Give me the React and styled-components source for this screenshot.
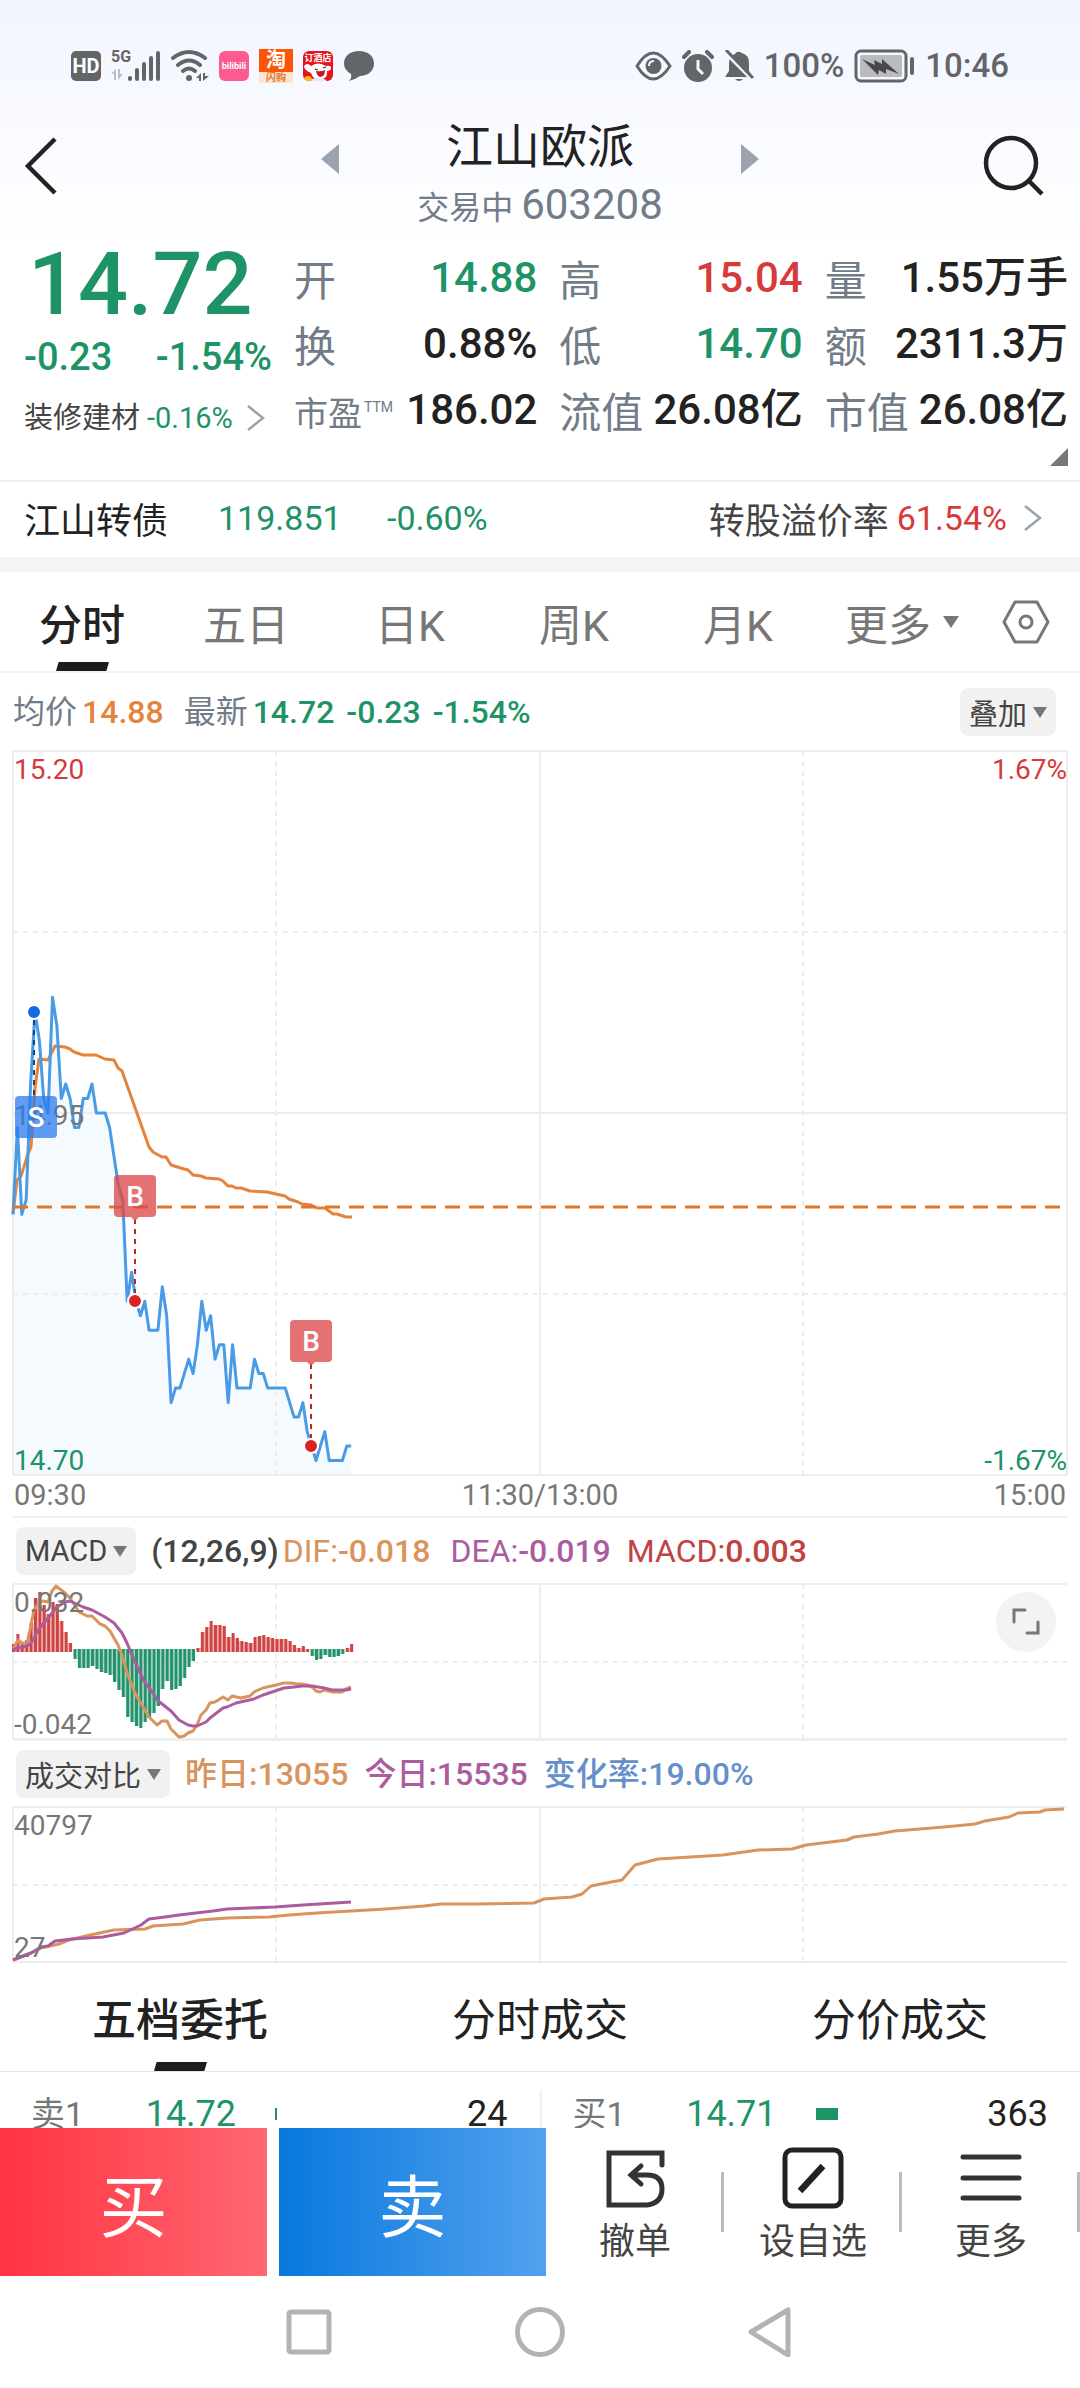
import React from 'react';
import styled, { createGlobalStyle } from 'styled-components';

const GREEN = '#1d9366';
const RED = '#d63b3b';
const INK = '#222';
const SLATE = '#717c88';
const GREY = '#777';
const ORANGE = '#e5833a';
const TAN = '#d9935c';
const PURPLE = '#ab5c9e';

const METRICS = [
  { label: '开', value: '14.88', color: GREEN },
  { label: '高', value: '15.04', color: RED },
  { label: '量', value: '1.55万手' },
  { label: '换', value: '0.88%' },
  { label: '低', value: '14.70', color: GREEN },
  { label: '额', value: '2311.3万' },
  { label: '市盈', sup: 'TTM', value: '186.02' },
  { label: '流值', value: '26.08亿' },
  { label: '市值', value: '26.08亿' },
];

const PERIODS = ['分时', '五日', '日K', '周K', '月K', '更多'];
const DETAIL_TABS = ['五档委托', '分时成交', '分价成交'];

const ORDERS = [
  { side: '卖1', price: '14.72', depth: 2, volume: '24' },
  { side: '买1', price: '14.71', depth: 22, volume: '363' },
];

const MINUTES = 240;
const CHART_W = 1054;
const PRICE_H = 724;
const SUB_H = 155;
const STEP = CHART_W / MINUTES;

// minute prices, in cents above 14.70
const PRICES = [
  18, 24, 18, 19, 27, 32, 30, 26, 25, 33, 31, 26, 27, 26, 24, 24, 26, 26, 27, 25,
  25, 25, 24, 22, 20, 19, 12, 14, 12, 11, 12, 10, 10, 10, 13, 11, 5, 6, 6, 7,
  8, 7, 9, 12, 10, 11, 8, 9, 9, 5, 9, 6, 6, 6, 6, 8, 7, 7, 6, 6,
  6, 6, 6, 5, 4, 4, 5, 3, 2, 1, 2, 3, 1, 1, 1, 1, 2, 2,
];

const AVERAGE = '0,463 4,429 8,425 15,403 18,396 22,337 26,308 35,309 42,295 52,296 57,298 61,301 70,304 83,304 92,308 101,309 105,317 109,320 136,396 140,401 149,406 153,406 158,414 171,418 175,419 180,424 188,425 193,427 206,428 210,430 215,435 219,435 223,437 228,437 237,440 254,441 263,443 272,445 276,448 285,451 289,453 298,454 304,457 312,457 320,463 324,463 333,466 339,466';

const MACD_ZERO = 66;
const MACD_BARS = [
  60, 50, 58, 56, 39, 14, 8, 21, 30, 18, 20, 37, 48, 59,
  75, 84, 84, 84, 82, 85, 88, 89, 91, 98, 106, 113, 133, 138, 142, 144, 138, 134, 129, 122, 105, 97, 106, 105, 102, 94, 83, 77,
  64, 48, 43, 37, 41, 41, 42, 53, 49, 54, 57, 58, 59, 53, 52, 51, 53, 54, 55, 55, 55, 57, 61, 64, 62, 65,
  72, 76, 75, 71, 73, 73, 72, 70, 64, 60,
];
const DIF = '0,65 5,56 9,59 14,59 17,46 21,26 26,18 30,17 35,18 39,7 43,2 52,9 57,14 66,28 74,32 79,32 87,40 92,42 97,47 105,61 109,71 114,89 122,109 127,118 136,133 144,141 149,137 154,137 158,145 166,153 171,152 175,149 180,147 184,141 188,131 193,126 197,119 202,118 210,113 215,116 219,112 228,114 237,112 241,108 250,104 263,101 271,99 277,99 285,100 289,100 294,101 299,103 303,107 307,108 311,106 320,108 329,108 333,105 338,103';
const DEA = '0,66 5,64 14,62 18,59 26,45 35,34 44,23 52,18 57,17 70,23 79,26 92,33 101,39 109,49 114,59 122,78 131,97 140,109 144,116 158,127 166,136 175,141 180,142 184,142 193,138 197,134 210,124 214,123 223,119 241,115 250,111 259,108 271,104 281,103 289,102 299,102 311,104 319,106 325,106 333,106 338,105';

const YESTERDAY = '0,153 18,146 28,141 46,137 56,133 77,128 101,123 132,122 140,119 170,117 187,113 214,111 256,110 276,108 304,106 338,104 373,102 411,99 428,97 462,97 521,96 531,92 559,90 569,87 578,79 593,76 609,73 622,58 645,52 710,48 745,43 779,42 793,38 834,33 841,30 865,27 882,24 931,20 962,17 972,14 996,10 1005,6 1027,5 1032,3 1051,2';
const TODAY = '0,153 18,146 28,140 35,139 42,134 59,132 90,130 111,126 128,118 136,112 152,110 166,108 200,104 214,102 262,100 290,98 338,95';

const TRADES = [
  { type: 'S', x: 21, dot: 261, box: 345, left: 2 },
  { type: 'B', x: 122, dot: 550, box: 424, left: 101 },
  { type: 'B', x: 298, dot: 695, box: 569, left: 277 },
];

const Chevron = () => (
  <svg width="20" height="28" viewBox="0 0 20 28" fill="none" stroke="#9aa2ad" strokeWidth="2.5" aria-hidden="true">
    <path d="M2 2l15 12L2 26" />
  </svg>
);

const SystemBar = () => (
  <StatusBar>
    <StatusIcons>
      <HdBadge>HD</HdBadge>
      <Signal>
        <span>5G</span>
        <svg width="50" height="34" viewBox="0 0 50 34" aria-hidden="true">
          <path d="M0 25l5-5v11H3v-6zM7 20v11l5-6h-3v-5z" fill="#bcbec2" />
          <g stroke="#646569" strokeWidth="4" strokeLinecap="round">
            <path d="M19 30v-1M26 30V21M33 30V15M40 30V9M47 30V4" />
          </g>
        </svg>
      </Signal>
      <svg width="38" height="34" viewBox="0 0 38 34" fill="none" stroke="#646569" strokeWidth="4" strokeLinecap="round" aria-hidden="true">
        <path d="M2 9q16-12 32 0M7 16q11-9 22 0M12 22q6-5 12 0" />
        <circle cx="18" cy="29" r="3" fill="#646569" stroke="none" />
        <path d="M25 29l5-5v8h-2v-3zM32 24v8l6-5h-4v-3z" fill="#646569" stroke="none" />
      </svg>
      <PinkApp>bilibili</PinkApp>
      <OrangeApp><b>淘</b><small>闪购</small></OrangeApp>
      <RedApp>
        <small>订酒店</small>
        <svg width="30" height="20" viewBox="0 0 30 20" aria-hidden="true">
          <path d="M1 4q3-4 7 0 7-5 15 0 5-1 5 2 0 3-4 3 1 8-7 8-7 1-9-6-7-3-7-7z" fill="#fff" />
          <path d="M12 7l3 1M20 6l3-1" stroke="#333" strokeWidth="1.3" />
          <path d="M13 9q5 1 9-1 0 7-5 7-3-1-4-6z" fill="#c51723" />
          <path d="M7 20q0-4 8-4t9 4z" fill="#e3e9fa" />
          <circle cx="5" cy="18" r="4" fill="#ffb72d" />
        </svg>
      </RedApp>
      <svg width="32" height="32" viewBox="0 0 32 32" fill="#646569" aria-hidden="true">
        <path d="M16 1c9 0 15 5 15 12.500S25 26 17 26q-4 3-11 5 3-3 2-7-7-4-7-10.500C1 6 7 1 16 1z" />
      </svg>
    </StatusIcons>
    <StatusIcons>
      <svg width="37" height="30" viewBox="0 0 37 30" fill="none" stroke="#646569" strokeWidth="3" aria-hidden="true">
        <path d="M2 15q16-26 33 0-17 26-33 0z" />
        <circle cx="18.500" cy="15" r="8" fill="#646569" stroke="none" />
        <path d="M14 15q0-5 5-5" stroke="#f4f8ff" strokeWidth="2" />
      </svg>
      <svg width="32" height="32" viewBox="0 0 32 32" aria-hidden="true">
        <circle cx="16" cy="18" r="14" fill="#646569" />
        <path d="M2 7l5-5M30 7l-5-5" stroke="#646569" strokeWidth="4" strokeLinecap="round" />
        <path d="M16 10v9l5 5" fill="none" stroke="#f4f8ff" strokeWidth="3" />
      </svg>
      <svg width="30" height="32" viewBox="0 0 30 32" aria-hidden="true">
        <path d="M1 27l4-6v-8q0-7 6-9 2-4 7-1 7 2 7 10v8l4 6zM11 29h8q-4 4-8 0z" fill="#646569" />
        <path d="M0 1l28 28" stroke="#f4f8ff" strokeWidth="4" />
        <path d="M2 0l27 28" stroke="#646569" strokeWidth="3" />
      </svg>
      <span>100%</span>
      <svg width="61" height="34" viewBox="0 0 61 34" aria-hidden="true">
        <rect x="2" y="2" width="50" height="30" rx="5" fill="none" stroke="#646569" strokeWidth="3" />
        <rect x="6" y="6" width="42" height="22" rx="2" fill="#b9bbbf" />
        <path d="M8 10l13 6-1-5 8 4 0-5 17 15-13-5v5l-7-4-1 5z" fill="#47484b" />
        <path d="M58 10v14" stroke="#646569" strokeWidth="4" strokeLinecap="round" />
      </svg>
      <span>10:46</span>
    </StatusIcons>
  </StatusBar>
);

const Grid = ({ height, rows }) => (
  <g fill="none" stroke="#eceeee" strokeWidth="2">
    <path d={`M0 0H${CHART_W}M0 ${height}H${CHART_W}M0 0V${height}M527 0V${height}`} />
    <path d={`M263 0V${height}M790 0V${height}`} strokeDasharray="5 5" />
    {rows.map((y) => <path key={y} d={`M0 ${y}H${CHART_W}`} strokeDasharray="5 5" />)}
  </g>
);

const PriceChart = () => {
  const line = PRICES.map((p, i) => `${(i * STEP).toFixed(1)},${(PRICE_H - p * 14.48).toFixed(1)}`).join(' ');
  const endX = (PRICES.length - 1) * STEP;
  return (
    <ChartBox>
      <Plot viewBox={`0 0 ${CHART_W} ${PRICE_H}`} role="img" aria-label="分时">
        <polygon points={`0,${PRICE_H} ${line} ${endX},${PRICE_H}`} fill="#f5faff" />
        <Grid height={PRICE_H} rows={[181, 543]} />
        <path d={`M0 362H${CHART_W}M${CHART_W} 0V${PRICE_H}`} stroke="#eceeee" strokeWidth="2" />
        <polyline points={AVERAGE} fill="none" stroke={ORANGE} strokeWidth="3" strokeLinejoin="round" />
        <polyline points={line} fill="none" stroke="#4a9be5" strokeWidth="3" strokeLinejoin="round" />
        <path d={`M0 456H${CHART_W}`} stroke="#e2762b" strokeWidth="3" strokeDasharray="15 9" />
      </Plot>
      <AxisLabel $top={0} $color={RED}>15.20</AxisLabel>
      <AxisLabel $top={0} $color={RED} $right>1.67%</AxisLabel>
      <AxisLabel $top={346}>14.95</AxisLabel>
      <AxisLabel $bottom={-5} $color={GREEN}>14.70</AxisLabel>
      <AxisLabel $bottom={-5} $color={GREEN} $right>-1.67%</AxisLabel>
      <Overlay viewBox={`0 0 ${CHART_W} ${PRICE_H}`} aria-hidden="true">
        {TRADES.map(({ type, x, dot, box, left }) => {
          const sell = type === 'S';
          return (
            <g key={x}>
              <path
                d={sell ? `M${x} ${dot + 8}V${box}` : `M${x} ${box + 44}V${dot - 8}`}
                stroke={sell ? '#1c3f80' : '#b02a2a'}
                strokeWidth="2"
                strokeDasharray="5 5"
              />
              <circle cx={x} cy={dot} r="7" fill={sell ? '#1269e6' : '#d92222'} stroke="#fff" strokeWidth="2" />
              <rect x={left} y={box} width="42" height="42" rx="4" fill={sell ? '#2b7bee' : '#dc4a4a'} fillOpacity={sell ? 0.75 : 0.78} />
              {!sell && <path d={`M${x - 4} ${box + 42}h8l-4 4z`} fill="#dc4a4a" fillOpacity="0.78" />}
              <text x={left + 21} y={box + 31} textAnchor="middle" fontSize="28" fontWeight="500" fill="#fff">{type}</text>
            </g>
          );
        })}
      </Overlay>
    </ChartBox>
  );
};

const MacdChart = () => (
  <ChartBox>
    <Plot viewBox={`0 0 ${CHART_W} ${SUB_H}`} role="img" aria-label="MACD">
      <Grid height={SUB_H} rows={[78]} />
      {MACD_BARS.map((y, i) => {
        const up = y < MACD_ZERO;
        const next = MACD_BARS[i + 1];
        const joined = next !== undefined && next < MACD_ZERO === up;
        const edge = up ? Math.max(y, next) : Math.min(y, next);
        return (
          <g key={i} fill={up ? '#d04343' : '#22936a'}>
            <rect x={i * STEP - 1} y={up ? y : 65} width="3" height={up ? 68 - y : y - 65} />
            {joined && <rect x={i * STEP + 2} y={up ? edge : 65} width="1.4" height={up ? 68 - edge : edge - 65} opacity="0.4" />}
          </g>
        );
      })}
      <polyline points={DIF} fill="none" stroke={TAN} strokeWidth="3" strokeLinejoin="round" />
      <polyline points={DEA} fill="none" stroke={PURPLE} strokeWidth="3" strokeLinejoin="round" />
    </Plot>
    <AxisLabel $top={0}>0.032</AxisLabel>
    <AxisLabel $bottom={-5}>-0.042</AxisLabel>
    <ExpandButton type="button" aria-label="MACD">
      <svg width="28" height="28" viewBox="0 0 28 28" fill="none" stroke={GREY} strokeWidth="3" strokeLinecap="round" aria-hidden="true">
        <path d="M2 14V2h11M26 14v11H15" />
      </svg>
    </ExpandButton>
  </ChartBox>
);

const VolumeChart = () => (
  <ChartBox>
    <Plot viewBox={`0 0 ${CHART_W} ${SUB_H}`} role="img" aria-label="成交对比">
      <Grid height={SUB_H} rows={[78]} />
      <polyline points={YESTERDAY} fill="none" stroke={TAN} strokeWidth="3" strokeLinejoin="round" />
      <polyline points={TODAY} fill="none" stroke={PURPLE} strokeWidth="3" strokeLinejoin="round" />
    </Plot>
    <AxisLabel $top={0}>40797</AxisLabel>
    <AxisLabel $bottom={-5}>27</AxisLabel>
  </ChartBox>
);

const App = () => (
  <>
    <GlobalStyle />
    <Screen>
      <Content>
        <SystemBar />
        <Header>
          <IconButton type="button" aria-label="返回">
            <svg width="34" height="60" viewBox="0 0 34 60" fill="none" stroke={INK} strokeWidth="4.500" aria-hidden="true">
              <path d="M31 3L4 30l27 27" />
            </svg>
          </IconButton>
          <StockNav>
            <StepButton type="button" aria-label="上一只">
              <svg width="18" height="30" viewBox="0 0 18 30" fill="#9aa3ae"><path d="M18 0v30L0 15z" /></svg>
            </StepButton>
            <StockTitle>
              <h1>江山欧派</h1>
              <p>交易中 <b>603208</b></p>
            </StockTitle>
            <StepButton type="button" aria-label="下一只">
              <svg width="18" height="30" viewBox="0 0 18 30" fill="#9aa3ae"><path d="M0 0v30l18-15z" /></svg>
            </StepButton>
          </StockNav>
          <IconButton type="button" aria-label="搜索" $end>
            <svg width="62" height="62" viewBox="0 0 62 62" fill="none" stroke={INK} strokeWidth="4.500" aria-hidden="true">
              <circle cx="29" cy="28" r="25" />
              <path d="M47 46l13 13" />
            </svg>
          </IconButton>
        </Header>

        <Quote>
          <QuoteMain>
            <Price>14.72</Price>
            <Change><span>-0.23</span><span>-1.54%</span></Change>
            <Sector href="#sector">装修建材 <b>-0.16%</b><Chevron /></Sector>
          </QuoteMain>
          <Metrics>
            {METRICS.map(({ label, sup, value, color }) => (
              <Metric key={label}>
                <MetricLabel $small={!!sup}>{label}{sup && <sup>{sup}</sup>}</MetricLabel>
                <MetricValue $color={color}>{value}</MetricValue>
              </Metric>
            ))}
          </Metrics>
          <Corner viewBox="0 0 18 18" aria-hidden="true"><path d="M18 0v18H0z" fill={GREY} /></Corner>
        </Quote>

        <Bond href="#bond">
          <BondName>江山转债</BondName>
          <BondFigure $width={169}>119.851</BondFigure>
          <BondFigure>-0.60%</BondFigure>
          <Premium>转股溢价率<b>61.54%</b></Premium>
          <Chevron />
        </Bond>

        <PeriodTabs>
          {PERIODS.map((name, i) => (
            <PeriodTab key={name} type="button" $active={i === 0}>
              {name}{name === '更多' && <Caret $size={8} />}
            </PeriodTab>
          ))}
          <Settings type="button" aria-label="设置">
            <svg width="48" height="44" viewBox="0 0 48 44" fill="none" stroke={GREY} strokeWidth="3" strokeLinejoin="round" aria-hidden="true">
              <path d="M13 2h22l11 20-11 20H13L2 22z" />
              <circle cx="24" cy="22" r="6" />
            </svg>
          </Settings>
        </PeriodTabs>

        <Legend>
          <Item $color={ORANGE} $gap={20}><i>均价</i>14.88</Item>
          <Item $color={GREEN} $gap={12}><i>最新</i>14.72</Item>
          <Item $color={GREEN} $gap={12}>-0.23</Item>
          <Item $color={GREEN}>-1.54%</Item>
          <Picker type="button" $end>叠加<Caret $size={7} /></Picker>
        </Legend>
        <PriceChart />
        <TimeAxis><span>09:30</span><span>11:30/13:00</span><span>15:00</span></TimeAxis>

        <Legend $compact>
          <Picker type="button">MACD<Caret $size={7} /></Picker>
          <Item $color="#444" $gap={4}>(12,26,9)</Item>
          <Item $color={TAN} $gap={20}><u>DIF:</u>-0.018</Item>
          <Item $color={PURPLE} $gap={16}><u>DEA:</u>-0.019</Item>
          <Item $color="#c24141"><u>MACD:</u>0.003</Item>
        </Legend>
        <MacdChart />

        <Legend $compact>
          <Picker type="button">成交对比<Caret $size={7} /></Picker>
          <Item $color={TAN} $gap={16}>昨日:13055</Item>
          <Item $color={PURPLE} $gap={16}>今日:15535</Item>
          <Item $color="#648fca">变化率:19.00%</Item>
        </Legend>
        <VolumeChart />

        <DetailTabs>
          {DETAIL_TABS.map((name, i) => (
            <DetailTab key={name} type="button" $active={i === 0}>{name}</DetailTab>
          ))}
        </DetailTabs>
        <OrderBook>
          {ORDERS.map(({ side, price, depth, volume }) => (
            <OrderTable key={side}>
              <tbody>
                <tr>
                  <th scope="row">{side}</th>
                  <td>{price}</td>
                  <td><DepthBar style={{ width: depth }} /></td>
                  <td>{volume}</td>
                </tr>
              </tbody>
            </OrderTable>
          ))}
        </OrderBook>
      </Content>

      <Dock>
        <TradeButton type="button" $from="#ff3341" $to="#ff6771">买</TradeButton>
        <TradeButton type="button" $from="#0878dd" $to="#52a1ef">卖</TradeButton>
        <DockItem type="button">
          <svg width="62" height="62" viewBox="0 0 62 62" fill="none" stroke="#333" strokeWidth="5" strokeLinecap="round" aria-hidden="true">
            <path d="M58 18V6H5v52h38q15-2 15-16 0-14-15-14H28M37 19l-10 9 10 9" />
          </svg>
          撤单
        </DockItem>
        <DockItem type="button">
          <svg width="62" height="62" viewBox="0 0 62 62" fill="none" stroke={INK} strokeWidth="5" aria-hidden="true">
            <rect x="3" y="3" width="56" height="56" rx="7" />
            <path d="M18 44l23-25" strokeWidth="6.500" />
          </svg>
          设自选
        </DockItem>
        <DockItem type="button">
          <svg width="62" height="62" viewBox="0 0 62 62" fill="none" stroke="#333" strokeWidth="5" strokeLinecap="round" aria-hidden="true">
            <path d="M3 10h56M3 31h56M3 51h56" />
          </svg>
          更多
        </DockItem>
      </Dock>
      <SystemNav>
        <button type="button" aria-label="最近">
          <svg width="50" height="50" viewBox="0 0 50 50"><rect x="5" y="5" width="40" height="40" rx="2" /></svg>
        </button>
        <button type="button" aria-label="主页">
          <svg width="50" height="50" viewBox="0 0 50 50"><circle cx="25" cy="25" r="22.500" /></svg>
        </button>
        <button type="button" aria-label="后退">
          <svg width="50" height="50" viewBox="0 0 50 50"><path d="M42 3v45L5 25z" /></svg>
        </button>
      </SystemNav>
    </Screen>
  </>
);

const GlobalStyle = createGlobalStyle`
  * {
    box-sizing: border-box;
  }

  body {
    margin: 0;
    background: #fff;
    color: ${INK};
    font-family: Roboto, "Noto Sans CJK SC", sans-serif;
  }

  h1, p, dl, dd {
    margin: 0;
  }

  button {
    margin: 0;
    padding: 0;
    border: 0;
    background: none;
    color: inherit;
    font: inherit;
    cursor: pointer;
  }

  a {
    color: inherit;
    text-decoration: none;
  }

  svg {
    display: block;
    flex: none;
  }
`;

const Screen = styled.div`
  display: flex;
  flex-direction: column;
  height: 100vh;
`;

const Content = styled.main`
  flex: 1;
  min-height: 0;
  overflow-y: auto;
  scrollbar-width: none;
  background: linear-gradient(#f1f5ff, #fff 240px);
`;

const StatusBar = styled.div`
  display: flex;
  align-items: center;
  justify-content: space-between;
  height: 110px;
  padding: 22px 71px 0;
`;

const StatusIcons = styled.div`
  display: flex;
  align-items: center;
  gap: 10px;
  color: #646569;
  font-size: 33px;
  font-weight: 500;
  line-height: 40px;
`;

const HdBadge = styled.span`
  width: 30px;
  height: 30px;
  border-radius: 5px;
  background: #646569;
  color: #fff;
  font-size: 20px;
  font-weight: 700;
  line-height: 30px;
  text-align: center;
`;

const Signal = styled.span`
  position: relative;

  span {
    position: absolute;
    top: 0;
    left: 0;
    font-size: 16px;
    font-weight: 700;
    line-height: 16px;
  }
`;

const PinkApp = styled.span`
  width: 30px;
  height: 30px;
  border-radius: 6px;
  background: #fd5a92;
  color: #fff;
  font-size: 9px;
  font-weight: 700;
  line-height: 30px;
  text-align: center;
`;

const OrangeApp = styled.span`
  display: flex;
  flex-direction: column;
  width: 34px;
  height: 34px;
  background: #fff;
  text-align: center;

  b {
    height: 23px;
    background: #fb5607;
    color: #fff;
    font-size: 20px;
    line-height: 22px;
  }

  small {
    background: #ffe5d0;
    color: #dd7a2c;
    font-size: 10px;
    font-weight: 700;
    line-height: 11px;
  }
`;

const RedApp = styled.span`
  width: 30px;
  height: 30px;
  overflow: hidden;
  border-radius: 6px;
  background: #e8141c;

  small {
    display: block;
    height: 11px;
    color: #fff;
    font-size: 9px;
    font-weight: 700;
    line-height: 14px;
    text-align: center;
  }
`;

const Header = styled.header`
  display: grid;
  grid-template-columns: 1fr 438px 1fr;
  height: 137px;
  padding: 0 24px;
`;

const IconButton = styled.button`
  justify-self: ${({ $end }) => ($end ? 'end' : 'start')};
  display: flex;
  align-items: center;
  height: 112px;
  padding-right: ${({ $end }) => ($end ? 12 : 0)}px;
`;

const StockNav = styled.div`
  display: flex;
  justify-content: space-between;
`;

const StepButton = styled.button`
  display: flex;
  align-items: center;
  height: 98px;
`;

const StockTitle = styled.div`
  padding-top: 7px;
  text-align: center;

  h1 {
    font-size: 47px;
    font-weight: 400;
    line-height: 60px;
  }

  p {
    color: ${SLATE};
    font-size: 32px;
    line-height: 56px;
  }

  b {
    font-size: 42px;
    font-weight: 400;
  }
`;

const Quote = styled.section`
  position: relative;
  display: flex;
  padding: 0 12px 35px 24px;
  border-bottom: 2px solid #f2f2f2;
`;

const QuoteMain = styled.div`
  width: 270px;
`;

const Price = styled.div`
  padding-left: 4px;
  color: ${GREEN};
  font-size: 88px;
  font-weight: 500;
  line-height: 74px;
`;

const Change = styled.div`
  display: flex;
  justify-content: space-between;
  padding-right: 22px;
  color: ${GREEN};
  font-size: 38px;
  font-weight: 500;
  line-height: 72px;
`;

const Sector = styled.a`
  display: flex;
  align-items: center;
  gap: 7px;
  color: #444;
  font-size: 29px;
  line-height: 50px;

  b {
    color: ${GREEN};
    font-weight: 400;
  }

  svg {
    margin-left: 6px;
  }
`;

const Metrics = styled.dl`
  flex: 1;
  display: grid;
  grid-template-columns: repeat(3, 1fr);
  column-gap: 22px;
`;

const Metric = styled.div`
  display: flex;
  justify-content: space-between;
  height: 66px;
  white-space: nowrap;
`;

const MetricLabel = styled.dt`
  padding-top: 4px;
  color: ${SLATE};
  font-size: ${({ $small }) => ($small ? 34 : 42)}px;
  line-height: 62px;

  sup {
    margin-left: 2px;
    font-size: 14px;
    line-height: 14px;
    vertical-align: 14px;
  }
`;

const MetricValue = styled.dd`
  color: ${({ $color }) => $color || INK};
  font-size: 42px;
  font-weight: 500;
  line-height: 62px;
`;

const Corner = styled.svg`
  position: absolute;
  right: 12px;
  bottom: 14px;
  width: 18px;
  height: 18px;
`;

const Bond = styled.a`
  display: flex;
  align-items: center;
  height: 90px;
  padding: 0 37px 4px 24px;
  border-bottom: 15px solid #f4f4f4;
  background: #fff;
`;

const BondName = styled.span`
  width: 194px;
  font-size: 36px;
`;

const BondFigure = styled.span`
  width: ${({ $width }) => ($width ? `${$width}px` : 'auto')};
  color: ${GREEN};
  font-size: 34px;
`;

const Premium = styled.span`
  display: flex;
  align-items: center;
  gap: 8px;
  margin: 0 16px 0 auto;
  color: #444;
  font-size: 36px;

  b {
    color: ${RED};
    font-size: 34px;
    font-weight: 400;
  }
`;

const PeriodTabs = styled.nav`
  display: flex;
  height: 101px;
  padding-right: 12px;
  border-bottom: 2px solid #f2f2f2;
`;

const tabMarker = `
  &::after {
    content: '';
    position: absolute;
    bottom: 0;
    left: calc(50% - 26px);
    width: 53px;
    height: 9px;
    background: #1c1c1c;
    clip-path: polygon(5% 0, 100% 0, 95% 100%, 0 100%);
  }
`;

const PeriodTab = styled.button`
  position: relative;
  flex: 164;
  display: flex;
  align-items: center;
  justify-content: center;
  gap: 12px;
  color: ${({ $active }) => ($active ? INK : GREY)};
  font-size: 43px;
  font-weight: ${({ $active }) => ($active ? 500 : 400)};
  ${({ $active }) => $active && tabMarker}
`;

const Settings = styled.button`
  flex: 84;
  display: flex;
  align-items: center;
  justify-content: center;
`;

const Caret = styled.span`
  width: 0;
  border: ${({ $size }) => $size}px solid transparent;
  border-top: ${({ $size }) => $size + 4}px solid ${GREY};
  border-bottom: 0;
`;

const Legend = styled.div`
  display: flex;
  align-items: center;
  height: ${({ $compact }) => ($compact ? 68 : 78)}px;
  margin: 0 13px;
  border-top: ${({ $compact }) => ($compact ? '2px solid #f0f0f0' : 0)};
  white-space: nowrap;
`;

const Item = styled.span`
  margin-right: ${({ $gap }) => $gap || 0}px;
  color: ${({ $color }) => $color};
  font-size: 32px;
  font-weight: 500;
  line-height: 48px;

  i {
    margin-right: 5px;
    color: ${SLATE};
    font-style: normal;
    font-weight: 400;
  }

  u {
    font-weight: 400;
    text-decoration: none;
  }
`;

const Picker = styled.button`
  display: flex;
  align-items: center;
  gap: 6px;
  height: 48px;
  margin: ${({ $end }) => ($end ? '0 11px 0 auto' : '0 15px 0 3px')};
  padding: 0 9px;
  border-radius: 8px;
  background: #f1f1f1;
  color: #444;
  font-size: 29px;
`;

const ChartBox = styled.div`
  position: relative;
  margin: 0 13px;
`;

const Plot = styled.svg`
  width: 100%;
  overflow: visible;
`;

const Overlay = styled(Plot)`
  position: absolute;
  inset: 0;
`;

const AxisLabel = styled.span`
  position: absolute;
  ${({ $bottom, $top }) => ($bottom === undefined ? `top: ${$top}px` : `bottom: ${$bottom}px`)};
  ${({ $right }) => ($right ? 'right: 0' : 'left: 1px')};
  color: ${({ $color }) => $color || GREY};
  font-size: 28px;
  line-height: 38px;
`;

const TimeAxis = styled.div`
  display: flex;
  justify-content: space-between;
  margin: 0 14px;
  color: ${GREY};
  font-size: 29px;
  line-height: 41px;
`;

const ExpandButton = styled.button`
  position: absolute;
  top: 8px;
  right: 11px;
  display: grid;
  place-items: center;
  width: 60px;
  height: 60px;
  border-radius: 50%;
  background: #f3f3f3;
`;

const DetailTabs = styled.nav`
  display: flex;
  height: 110px;
  border-bottom: 1px solid #e5e5e5;
`;

const DetailTab = styled.button`
  position: relative;
  flex: 1;
  font-size: 44px;
  font-weight: ${({ $active }) => ($active ? 500 : 400)};
  ${({ $active }) => $active && tabMarker}
`;

const OrderBook = styled.section`
  display: flex;
  padding-top: 18px;
`;

const OrderTable = styled.table`
  flex: 1;
  border-collapse: collapse;
  table-layout: fixed;
  font-size: 36px;
  line-height: 48px;

  & + & {
    border-left: 2px solid #f0f0f0;
  }

  th, td {
    padding: 0;
    text-align: left;
    font-weight: 400;
  }

  th {
    width: 27%;
    padding-left: 31px;
    color: ${GREY};
    font-size: 34px;
  }

  td:nth-child(2) {
    width: 24%;
    color: ${GREEN};
  }

  td:last-child {
    padding-right: 32px;
    text-align: right;
  }
`;

const DepthBar = styled.div`
  height: 12px;
  background: ${GREEN};
`;

const Dock = styled.footer`
  display: flex;
  height: 148px;
  background: #fff;
`;

const TradeButton = styled.button`
  flex: 267;
  margin-right: 12px;
  background: linear-gradient(90deg, ${({ $from }) => $from}, ${({ $to }) => $to});
  color: #fff;
  font-size: 68px;

  & + & {
    margin-right: 0;
  }
`;

const DockItem = styled.button`
  position: relative;
  flex: 178;
  display: flex;
  flex-direction: column;
  align-items: center;
  gap: 7px;
  padding-top: 19px;
  color: #444;
  font-size: 36px;
  line-height: 52px;

  &::after {
    content: '';
    position: absolute;
    top: 44px;
    right: 0;
    width: 3px;
    height: 60px;
    background: #bbb;
  }
`;

const SystemNav = styled.nav`
  display: flex;
  justify-content: center;
  gap: 181px;
  height: 112px;
  background: #fff;

  svg {
    fill: none;
    stroke: #b3b3b3;
    stroke-width: 5;
    stroke-linejoin: round;
  }
`;

export default App;
